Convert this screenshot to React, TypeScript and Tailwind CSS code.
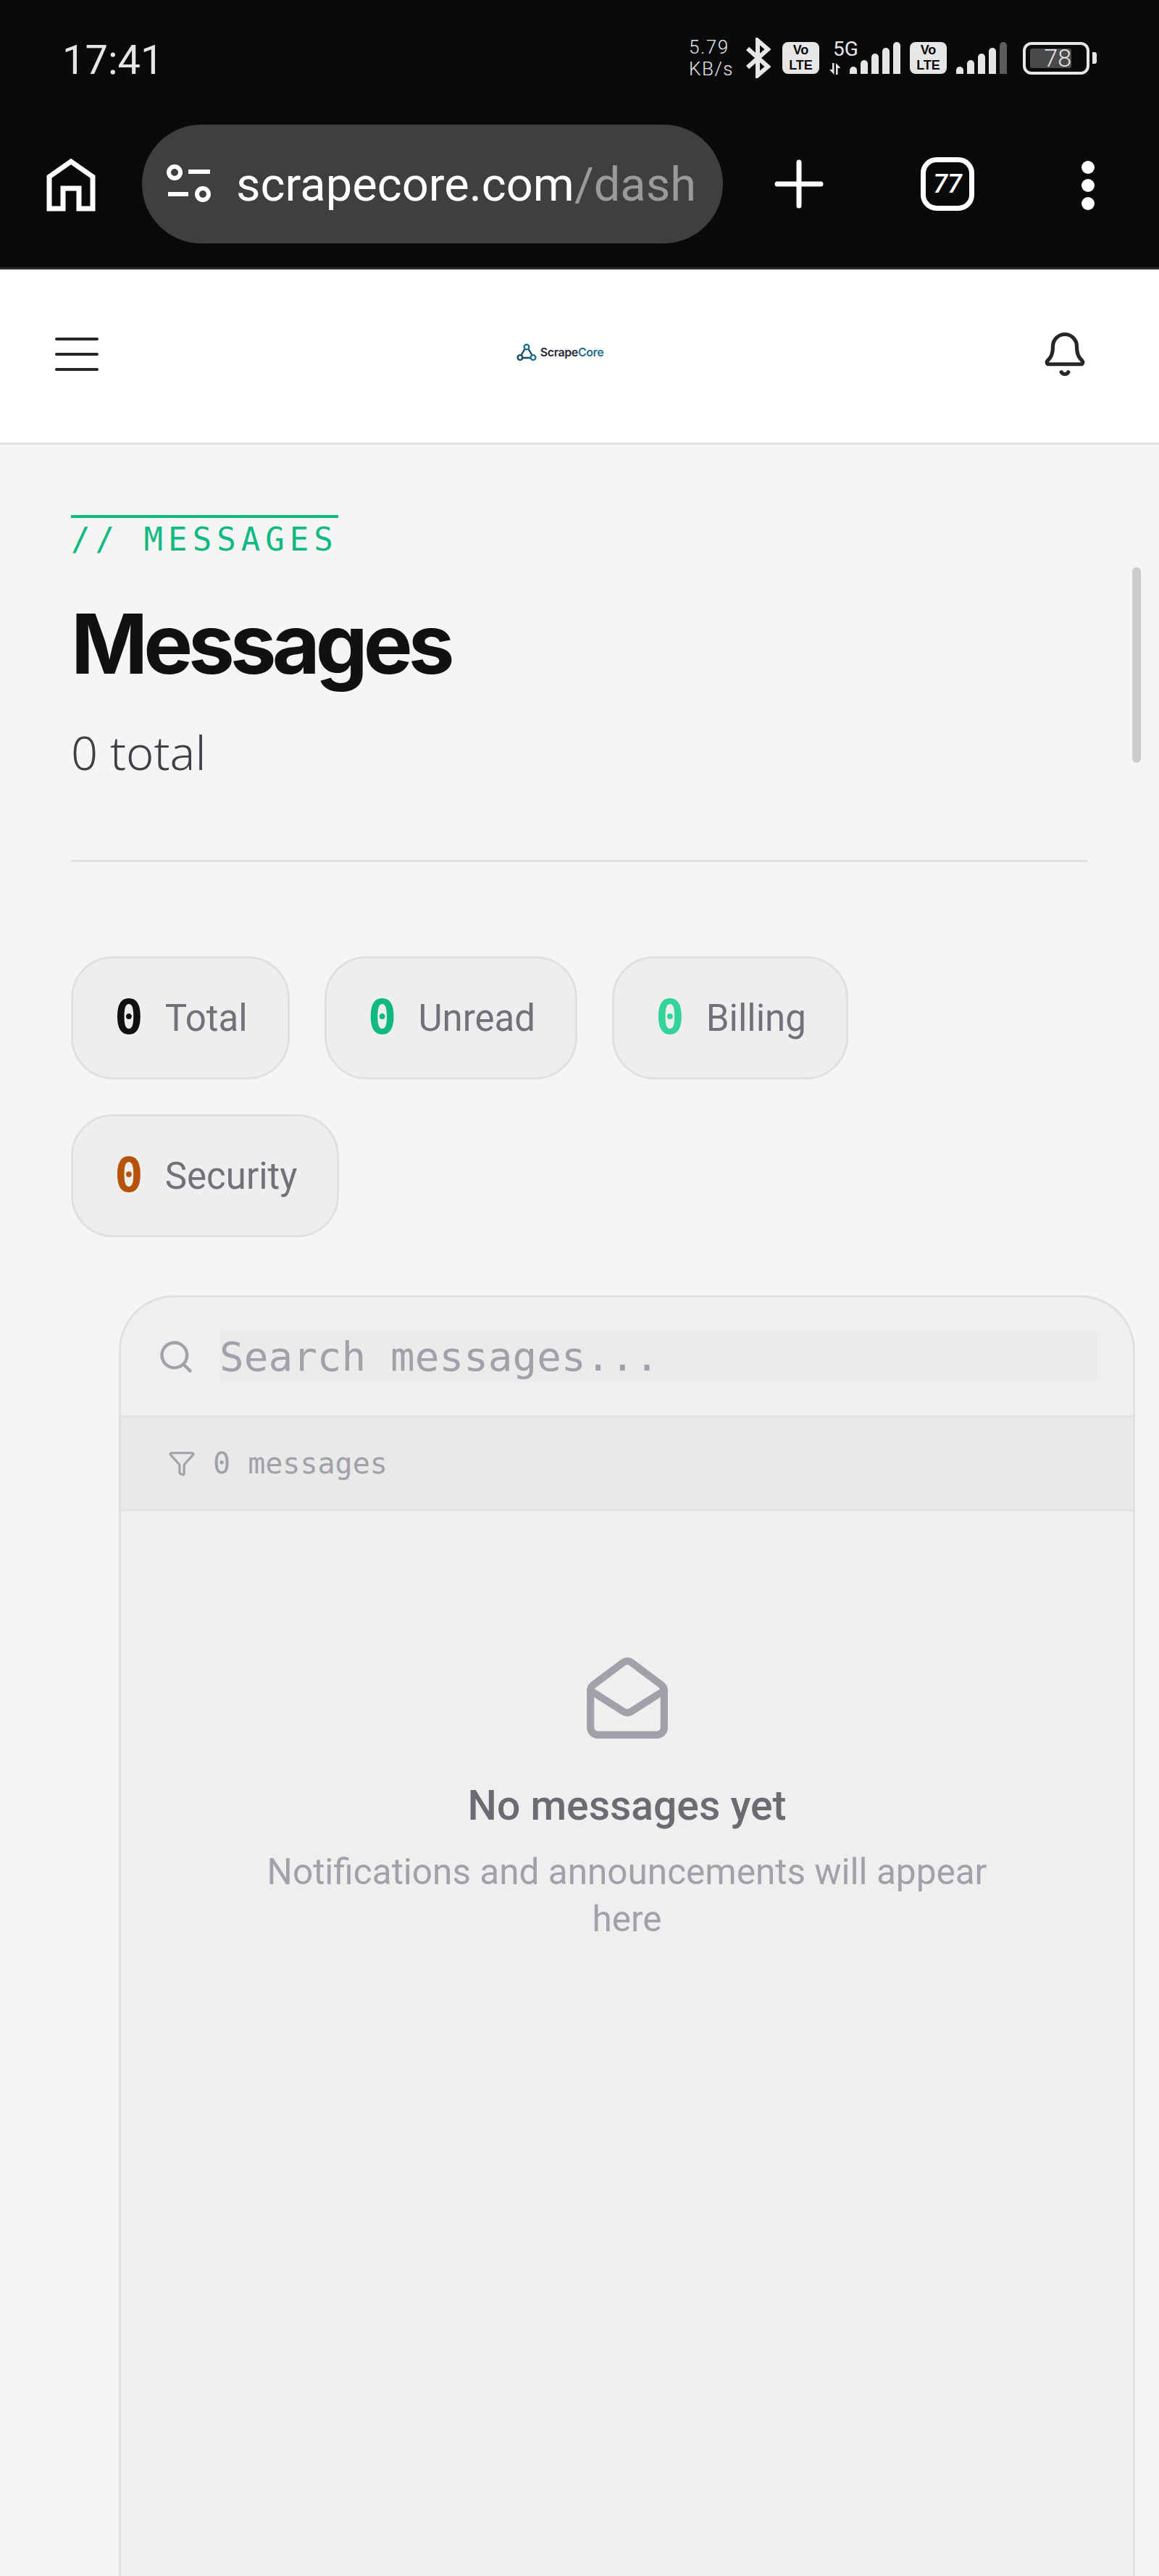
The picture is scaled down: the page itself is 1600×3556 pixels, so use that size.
import { Search, Filter, Bell, MailOpen } from "lucide-react"

const mono = "font-['DejaVu_Sans_Mono',monospace]"
const sans = "font-['Noto_Sans',sans-serif]"
const roboto = "font-['Roboto',sans-serif]"

function StatusBars({ dim }: { dim?: boolean }) {
  const heights = [10, 19, 28, 36, 44]
  return (
    <div className="flex h-[44px] items-end gap-[5px]">
      {heights.map((h, i) => (
        <div
          key={i}
          className={`w-[10px] rounded-t-[5px] ${dim && i === 4 ? "bg-[#5c5c5c]" : "bg-[#e6e6e6]"}`}
          style={{ height: h }}
        />
      ))}
    </div>
  )
}

function VoLte() {
  return (
    <div className="flex h-[44px] w-[51px] flex-col items-center justify-center rounded-[8px] bg-[#e6e6e6] font-['Liberation_Sans',sans-serif] text-[18px] font-bold leading-[21px] text-[#0a0a0c]">
      <span>Vo</span>
      <span>LTE</span>
    </div>
  )
}

function StatusBar() {
  return (
    <div className="flex h-[160px] items-center justify-between pl-[86px] pr-[86px] text-[#e6e6e6]">
      <span className={`${roboto} pt-[6px] text-[56px] leading-none`}>17:41</span>
      <div className="flex items-center">
        <div className={`${roboto} flex w-[59px] flex-col items-start text-[26px] font-light leading-[30px] tracking-[0.06em]`}>
          <span>5.79</span>
          <span>KB/s</span>
        </div>
        <svg viewBox="0 0 35 56" className="ml-[19px] h-[56px] w-[35px]" fill="none" stroke="#e6e6e6" strokeWidth="6">
          <path d="M3 15 L31 40 L17 52 V4 L31 16 L3 41" />
        </svg>
        <div className="ml-[16px]">
          <VoLte />
        </div>
        <div className="ml-[14px] flex h-[46px] w-[28px] flex-col justify-between whitespace-nowrap">
          <span className={`${roboto} ml-[5px] text-[28px] leading-[22px]`}>5G</span>
          <svg viewBox="0 0 16 16" className="h-[16px] w-[16px]" fill="#e6e6e6">
            <path d="M4 0h2.500v16L0 9h4zM9 16V0l6.500 7H11.500v9z" />
          </svg>
        </div>
        <StatusBars />
        <div className="ml-[13px]">
          <VoLte />
        </div>
        <div className="ml-[13px]">
          <StatusBars dim />
        </div>
        <div className="ml-[22px] flex h-[45px] w-[92px] items-center rounded-[12px] border-[4px] border-[#e6e6e6] pl-[6px]">
          <div className={`${roboto} flex h-[27px] w-[57px] items-center justify-end rounded-[3px] bg-[#4a4a4a] text-[34px] font-light leading-none text-[#e6e6e6]`}>
            78
          </div>
        </div>
        <div className="ml-[4px] h-[16px] w-[6px] rounded-r-[3px] bg-[#e6e6e6]" />
      </div>
    </div>
  )
}

function BrowserBar() {
  return (
    <div className="flex h-[209px] items-start pt-[12px]">
      <div className="flex w-[196px] justify-center pt-[46px]">
        <svg viewBox="0 0 68 74" className="h-[74px] w-[68px]" fill="none" stroke="white" strokeWidth="7" strokeLinejoin="miter">
          <path d="M4 70 V26 L34 5 L64 26 V70 H45 V42 H23 V70 Z" />
        </svg>
      </div>
      <div className="flex h-[164px] w-[802px] items-center rounded-full bg-[#3f3f41] pl-[34px]">
        <svg viewBox="0 0 62 54" className="h-[54px] w-[62px] shrink-0" fill="none" stroke="white" strokeWidth="6">
          <circle cx="11" cy="11" r="8" />
          <path d="M30 10 H60" />
          <path d="M2 41 H30" />
          <circle cx="50" cy="41" r="8" />
        </svg>
        <span className={`${roboto} ml-[34px] pt-[3px] text-[65px] leading-none text-white`}>
          scrapecore.com<span className="text-[#9a9a9c]">/dash</span>
        </span>
      </div>
      <div className="flex w-[210px] justify-center pt-[48px]">
        <svg viewBox="0 0 68 68" className="h-[68px] w-[68px]" fill="none" stroke="white" strokeWidth="7" strokeLinecap="round">
          <path d="M34 4 V64 M4 34 H64" />
        </svg>
      </div>
      <div className="flex w-[200px] justify-center pt-[45px]">
        <div className={`${roboto} flex h-[74px] w-[74px] items-center justify-center rounded-[22px] border-[7px] border-white text-[36px] font-medium italic leading-none text-white`}>
          77
        </div>
      </div>
      <div className="flex w-[188px] flex-col items-center gap-[7px] pt-[50px]">
        <div className="h-[18px] w-[18px] rounded-full bg-white" />
        <div className="h-[18px] w-[18px] rounded-full bg-white" />
        <div className="h-[18px] w-[18px] rounded-full bg-white" />
      </div>
    </div>
  )
}

function AppHeader() {
  return (
    <div className="flex h-[242px] items-center justify-between border-b-[3px] border-[#e2e2e2] bg-white pl-[76px] pr-[97px]">
      <div className="mb-[6px] flex w-[60px] flex-col gap-[17px]">
        <div className="h-[4px] rounded-full bg-[#27272a]" />
        <div className="h-[4px] rounded-full bg-[#27272a]" />
        <div className="h-[4px] rounded-full bg-[#27272a]" />
      </div>
      <div className="mb-[12px] mr-[27px] flex items-center gap-[5px]">
        <svg viewBox="0 0 28 24" className="h-[24px] w-[28px]" fill="none" strokeWidth="2.4">
          <path d="M12 7 L6 17 M16 7 L22 17 M9 20 H19" stroke="#134e5e" />
          <circle cx="14" cy="5" r="3.4" stroke="#1f6f8b" />
          <circle cx="5" cy="19.500" r="3.4" stroke="#134e5e" />
          <circle cx="23" cy="19.500" r="3.4" stroke="#1f6f8b" />
        </svg>
        <span className="font-['Inter',sans-serif] text-[16px] font-semibold leading-none tracking-tight text-[#1f2937]">
          Scrape<span className="text-[#1f6f8b]">Core</span>
        </span>
      </div>
      <Bell className="mb-[6px] h-[66px] w-[66px] text-[#27272a]" strokeWidth={1.9} />
    </div>
  )
}

function StatChip({ value, label, color }: { value: string; label: string; color: string }) {
  return (
    <div className="flex h-[170px] items-center gap-[30px] rounded-[58px] border-[3px] border-[#e0e0e0] bg-[#eeeeee] pl-[57px] pr-[55px]">
      <span className={`${mono} text-[66px] font-bold leading-none ${color}`}>{value}</span>
      <span className={`${roboto} text-[51px] leading-none text-[#71717a]`}>{label}</span>
    </div>
  )
}

export default function App() {
  return (
    <div className="relative flex h-[3556px] w-[1600px] flex-col overflow-hidden bg-[#f5f5f5]">
      <div className="border-b-[3px] border-[#2a2a2c] bg-[#0a0a0c]">
        <StatusBar />
        <BrowserBar />
      </div>
      <AppHeader />

      <div className="flex flex-col pl-[98px] pr-[99px] pt-[97px]">
        <div className="w-fit border-t-[4px] border-[#10b981] pt-[4px]">
          <span className={`${mono} block text-[44px] leading-[52px] tracking-[0.16em] text-[#10b981]`}>
            // MESSAGES
          </span>
        </div>
        <h1 className="mt-[48px] font-['Inter',sans-serif] text-[114px] font-bold leading-[140px] tracking-[-0.053em] text-[#111111]">
          Messages
        </h1>
        <p className={`${sans} mt-[37px] text-[65px] font-light leading-[84px] text-[#3f3f46]`}>0 total</p>
        <div className="mt-[107px] h-[3px] bg-[#e2e2e2]" />
        <div className="mt-[130px] flex flex-wrap gap-x-[48px] gap-y-[48px]">
          <StatChip value="0" label="Total" color="text-[#111111]" />
          <StatChip value="0" label="Unread" color="text-[#10b981]" />
          <StatChip value="0" label="Billing" color="text-[#34d399]" />
          <StatChip value="0" label="Security" color="text-[#b45309]" />
        </div>
      </div>

      <div className="ml-[164px] mr-[33px] mt-[80px] flex min-h-0 flex-1 flex-col rounded-t-[76px] border-x-[3px] border-t-[3px] border-[#e0e0e0] bg-[#efefef]">
        <div className="flex h-[166px] shrink-0 items-center gap-[34px] border-b-[3px] border-[#e0e0e0] pl-[50px] pr-[50px]">
          <Search className="h-[52px] w-[52px] shrink-0 text-[#a1a1aa]" strokeWidth={2} />
          <div className={`${mono} flex h-[73px] flex-1 items-center bg-[#ebebeb] text-[56px] leading-none text-[#a1a1aa]`}>
            Search messages...
          </div>
        </div>
        <div className="flex h-[129px] shrink-0 items-center gap-[24px] border-b-[3px] border-[#e0e0e0] bg-[#e9e9e9] pl-[65px]">
          <Filter className="h-[38px] w-[38px] text-[#a1a1aa]" strokeWidth={2} />
          <span className={`${mono} text-[40px] leading-none text-[#a1a1aa]`}>0 messages</span>
        </div>
        <div className="flex flex-col items-center px-[180px] pt-[197px]">
          <MailOpen className="h-[122px] w-[122px] text-[#a1a1aa]" strokeWidth={2} />
          <h2 className={`${roboto} mt-[50px] text-[57px] font-medium leading-[76px] text-[#6b6b72]`}>No messages yet</h2>
          <p className={`${roboto} mt-[21px] text-center text-[49.5px] leading-[65px] text-[#a1a1aa]`}>
            Notifications and announcements will appear here
          </p>
        </div>
      </div>

      <div className="absolute left-[1563px] top-[783px] h-[270px] w-[12px] rounded-full bg-[#cccccc]" />
    </div>
  )
}
